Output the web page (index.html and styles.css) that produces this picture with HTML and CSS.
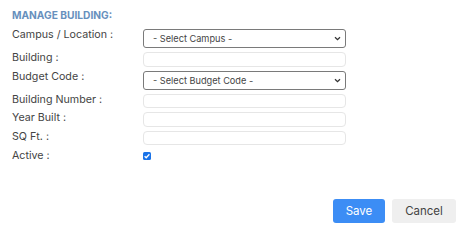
FILE: index.html
```html
<!DOCTYPE html>
<html>
<head>
<meta charset="utf-8">
<link rel="stylesheet" href="styles.css">
</head>
<body>
<div class="panel">
  <div class="title">MANAGE BUILDING:</div>
  <div class="form">
    <div class="row r-sel"><label class="lbl">Campus / Location :</label><div class="select"><span>- Select Campus -</span><svg class="chev" width="7" height="5" viewBox="0 0 7 5"><path d="M1 1.2 L3.5 3.6 L6 1.2" fill="none" stroke="#333" stroke-width="1.3"/></svg></div></div>
    <div class="row r-in"><label class="lbl">Building :</label><div class="input"></div></div>
    <div class="row r-sel"><label class="lbl">Budget Code :</label><div class="select"><span>- Select Budget Code -</span><svg class="chev" width="7" height="5" viewBox="0 0 7 5"><path d="M1 1.2 L3.5 3.6 L6 1.2" fill="none" stroke="#333" stroke-width="1.3"/></svg></div></div>
    <div class="row r-in"><label class="lbl">Building Number :</label><div class="input"></div></div>
    <div class="row r-in"><label class="lbl">Year Built :</label><div class="input"></div></div>
    <div class="row r-in"><label class="lbl">SQ Ft. :</label><div class="input"></div></div>
    <div class="row r-chk"><label class="lbl">Active :</label><div class="check"><svg width="8" height="8" viewBox="0 0 8 8"><path d="M1.6 4.2 L3.2 5.8 L6.4 2.2" fill="none" stroke="#fff" stroke-width="1.3"/></svg></div></div>
  </div>
  <div class="actions">
    <button class="btn save">Save</button>
    <button class="btn cancel">Cancel</button>
  </div>
</div>
</body>
</html>
```
FILE: styles.css
```css
html, body { margin: 0; padding: 0; background: #fff; }
body { font-family: Inter, "Liberation Sans", Arial, sans-serif; color: #444; }
.panel { width: 472px; height: 236px; box-sizing: border-box; padding: 10px 0 0 12px; position: relative; }
.title { font-size: 10.2px; font-weight: bold; color: #6790bd; line-height: 11px; height: 11px; }
.form { margin-top: 8px; display: flex; flex-direction: column; gap: 4px; }
.row { display: flex; align-items: center; }
.lbl { width: 131px; font-size: 10.7px; line-height: 12px; color: #444; }
.r-sel .lbl { align-self: flex-start; margin-top: 0px; }
.r-in .lbl { margin-top: -2px; }
.select { width: 203px; height: 19px; box-sizing: border-box; border: 1px solid #7a7a7a; border-radius: 3px; display: flex; align-items: center; justify-content: space-between; padding: 0 4px 0 9px; font-size: 9.2px; color: #444; }
.input { width: 203px; height: 14.5px; box-sizing: border-box; border: 1px solid #e6e6e6; border-radius: 4px; }
.r-chk { margin-top: 1px; }
.check { width: 8px; height: 8px; background: #1a73e8; border-radius: 1.5px; display: flex; }
.actions { position: absolute; left: 333px; top: 199px; display: flex; gap: 7px; }
.btn { border: none; font-family: Inter, "Liberation Sans", Arial, sans-serif; font-size: 11.5px; height: 24px; border-radius: 3px; padding: 0; }
.save { width: 52px; background: #3c8df5; color: #fff; }
.cancel { width: 64px; background: #efefef; color: #444; }
```
